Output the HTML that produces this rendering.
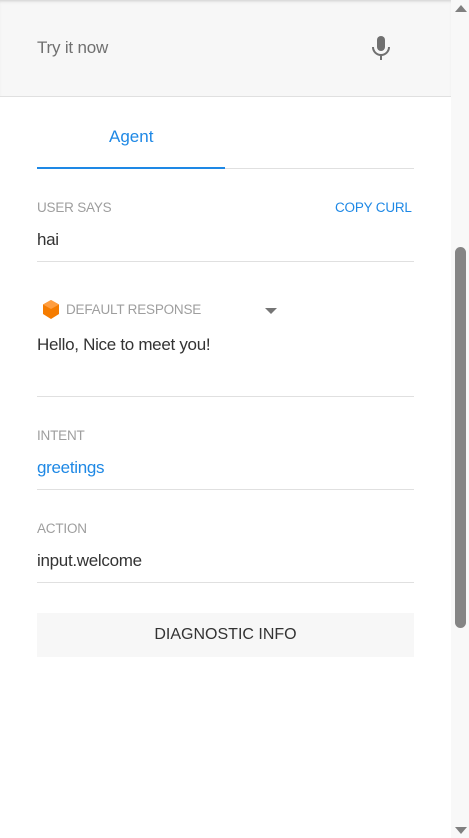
<!DOCTYPE html>
<html><head><meta charset="utf-8"><style>
*{margin:0;padding:0;box-sizing:border-box}
body{width:469px;height:838px;overflow:hidden;background:#fff;font-family:"Liberation Sans",Arial,sans-serif;position:relative}
.hdr{position:absolute;left:0;top:0;width:451px;height:97px;background:#f7f7f7;border-bottom:1px solid #e0e0e0;box-shadow:inset 0 3px 3px -2px #ccc}
.hdr .t{position:absolute;left:37px;top:38px;font-size:17px;color:#707070;letter-spacing:-0.2px}
.sb{position:absolute;left:451px;top:0;width:18px;height:838px;background:#f8f8f8}
.thumb{position:absolute;left:455px;top:247px;width:11px;height:381px;background:#858585;border-radius:6px}
.abs{position:absolute}
.lbl{font-size:13.5px;color:#9e9e9e;letter-spacing:-0.2px}
.val{font-size:17px;color:#333;letter-spacing:-0.3px}
.line{position:absolute;left:37px;width:377px;height:1px;background:#e0e0e0}
</style></head><body>
<div class="hdr"><div class="t">Try it now</div>
<svg class="abs" style="left:370px;top:35px" width="22" height="26" viewBox="0 0 22 26"><rect x="7" y="1" width="8" height="15" rx="4" fill="#707070"/><path d="M3 12 a8 8 0 0 0 16 0" stroke="#707070" stroke-width="2" fill="none"/><rect x="10" y="19" width="2" height="6" fill="#707070"/></svg>
</div>
<div class="sb"></div>
<svg class="abs" style="left:455px;top:3px" width="12" height="10"><path d="M0 9 L6 2 L12 9Z" fill="#808080"/></svg>
<svg class="abs" style="left:455px;top:826px" width="12" height="10"><path d="M0 1 L6 8 L12 1Z" fill="#808080"/></svg>
<div class="thumb"></div>
<div class="abs" style="left:109px;top:127px;font-size:17px;color:#1e88e5">Agent</div>
<div class="line" style="top:168px"></div>
<div class="abs" style="left:37px;top:167px;width:188px;height:2px;background:#1e88e5"></div>
<div class="abs lbl" style="left:37px;top:200px">USER SAYS</div>
<div class="abs lbl" style="left:335px;top:200px;color:#1e88e5">COPY CURL</div>
<div class="abs val" style="left:37px;top:230px">hai</div>
<div class="line" style="top:261px"></div>
<svg class="abs" style="left:42px;top:300px" width="18" height="20" viewBox="0 0 18 20"><path d="M9 0 L17 4.5 V14 L9 19 L1 14 V4.5Z" fill="#f57c00"/><path d="M9 0 L17 4.5 L9 9 L1 4.5Z" fill="#ff9e40"/></svg>
<div class="abs lbl" style="left:66px;top:302px">DEFAULT RESPONSE</div>
<svg class="abs" style="left:265px;top:308px" width="12" height="7"><path d="M0 0 L12 0 L6 6Z" fill="#757575"/></svg>
<div class="abs val" style="left:37px;top:335px">Hello, Nice to meet you!</div>
<div class="line" style="top:396px"></div>
<div class="abs lbl" style="left:37px;top:428px">INTENT</div>
<div class="abs val" style="left:37px;top:458px;color:#1e88e5">greetings</div>
<div class="line" style="top:489px"></div>
<div class="abs lbl" style="left:37px;top:521px">ACTION</div>
<div class="abs val" style="left:37px;top:551px">input.welcome</div>
<div class="line" style="top:582px"></div>
<div class="abs" style="left:37px;top:613px;width:377px;height:44px;background:#f7f7f7;text-align:center;line-height:44px;font-size:16px;color:#333">DIAGNOSTIC INFO</div>
</body></html>
